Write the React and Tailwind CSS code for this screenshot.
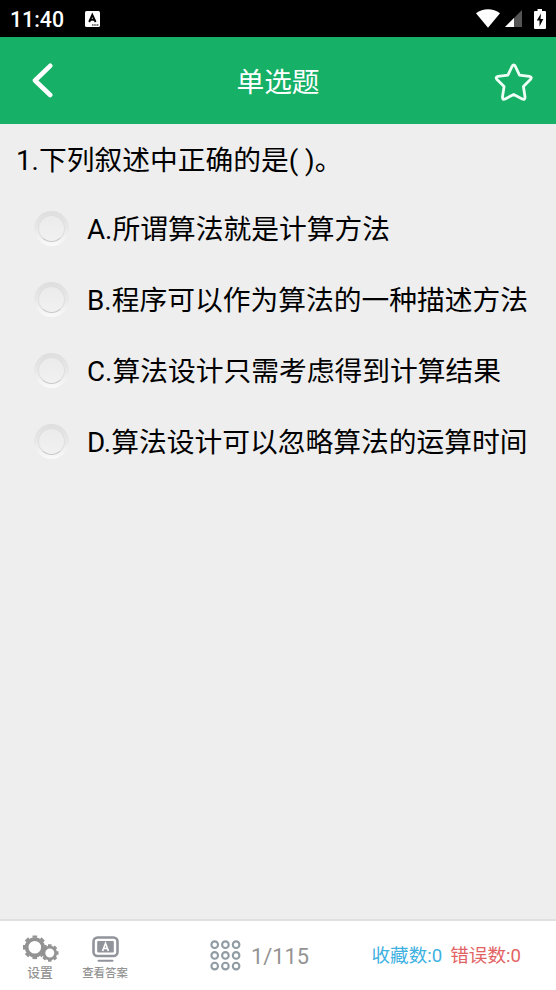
import React from 'react';

const options = [
  { key: 'A', text: '所谓算法就是计算方法' },
  { key: 'B', text: '程序可以作为算法的一种描述方法' },
  { key: 'C', text: '算法设计只需考虑得到计算结果' },
  { key: 'D', text: '算法设计可以忽略算法的运算时间' },
];

function StatusBar() {
  return (
    <div className="flex h-[37px] shrink-0 items-center bg-black pl-[10px] pr-[10px] text-white">
      <span className="mt-[2px] w-[75px] text-[21.3px] leading-none font-medium">11:40</span>
      <svg className="mt-px h-4 w-[15px]" viewBox="0 0 15 16">
        <rect width="15" height="16" rx="1.5" fill="#fff" />
        <path d="M4.2 11 7.3 3.8 10.6 11M5.3 8.8h4" fill="none" stroke="#000" strokeWidth="1.9" />
        <path d="M7 14h7" stroke="#000" strokeWidth="1.2" strokeDasharray="1.6 .6" />
      </svg>
      <svg className="ml-auto h-[19px] w-6" viewBox="0 0 24 19">
        <path d="M0 4.2C7-1.2 17-1.2 24 4.2L12 18.7Z" fill="#fff" />
      </svg>
      <svg className="ml-[5px] h-[17px] w-[17px]" viewBox="0 0 17 17">
        <path d="M17 0v17H0Z" fill="#555" />
        <path d="M9 8v9H0Z" fill="#fff" />
      </svg>
      <svg className="ml-[12px] h-5 w-[12px]" viewBox="0 0 12 20">
        <path d="M3.5 0h4.5v2H11q1 0 1 1v16q0 1-1 1H1q-1 0-1-1V3q0-1 1-1h2.5Z" fill="#fff" />
        <path d="M7 4.5 2.8 11.5H5.5V17.5L9.3 10H6.5Z" fill="#000" />
      </svg>
    </div>
  );
}

function Header() {
  return (
    <header className="flex h-[87px] shrink-0 items-center justify-between bg-[#16b067] pr-[22px] pl-[31px] text-white">
      <button className="w-[31px]" aria-label="返回">
        <svg className="h-9 w-[22px]" viewBox="0 0 22 36">
          <path d="M19.2 2.8 4 17.5 19.2 32" fill="none" stroke="#fff" strokeWidth="4.6" strokeLinecap="round" strokeLinejoin="round" />
        </svg>
      </button>
      <h1 className="mt-[4px] text-[27.7px] leading-none">单选题</h1>
      <button aria-label="收藏">
        <svg className="mt-[3px] h-10 w-10" viewBox="0 0 40 40">
          <path
            d="M18 4.5Q19.7 1.1 21.4 4.5L25.5 13.2 35.3 14.4Q38.6 15 36.4 17.5L29.4 24.5 31 34.8Q31.2 38.2 28.2 36.9L19.7 32.5 11.2 36.9Q8.2 38.2 8.5 34.8L10.1 24.5 3 17.5Q.9 15 4.1 14.4L13.9 13.2Z"
            fill="none"
            stroke="#effff6"
            strokeWidth="2.8"
            strokeLinejoin="round"
          />
        </svg>
      </button>
    </header>
  );
}

function Radio() {
  return (
    <span className="mb-px flex h-[35px] w-[35px] shrink-0 items-center justify-center rounded-full bg-linear-to-b from-[#dedede] via-[#e8e8e8] to-[#fafafa]">
      <span className="h-[27px] w-[27px] rounded-full border border-[#dedede] border-b-[#c9c9c9] bg-linear-to-b from-[#ebebeb] to-[#f1f1f1]" />
    </span>
  );
}

// Ring with eight square teeth
function Gear({ cx, cy, r, rim, tooth, width }) {
  const outer = r + rim / 2;
  return (
    <g transform={`translate(${cx} ${cy})`} stroke="#939393" fill="none">
      <circle r={r} strokeWidth={rim} />
      {[0, 45, 90, 135, 180, 225, 270, 315].map((angle) => (
        <path key={angle} d={`M0 ${-outer + 0.5}V${-outer - tooth}`} strokeWidth={width} transform={`rotate(${angle})`} />
      ))}
    </g>
  );
}

function Footer() {
  return (
    <footer className="flex h-[71px] shrink-0 border-t-2 border-[#e0e0e0] bg-white text-[#939393]">
      <button className="ml-[20px] flex w-[40px] flex-col items-center pt-[12px]">
        <svg className="h-[30px] w-[37px] shrink-0" viewBox="0 0 37 30">
          <Gear cx={12.8} cy={14.3} r={8.2} rim={3.8} tooth={1.7} width={4.6} />
          <Gear cx={27.8} cy={20} r={5.9} rim={2.8} tooth={1.4} width={3.6} />
        </svg>
        <span className="mt-[3px] text-[12.8px] leading-[14px] font-medium">设置</span>
      </button>
      <button className="ml-[15px] flex w-[60px] flex-col items-center pt-[14px]">
        <svg className="h-[28px] w-[27px] shrink-0" viewBox="0 0 27 28">
          <rect x="1.5" y="2.5" width="24" height="18.5" rx="4" fill="none" stroke="#92949c" strokeWidth="2.6" />
          <rect x="5.2" y="6" width="16.6" height="11.6" rx="1" fill="#92949c" />
          <path d="M6.5 25.7h14" stroke="#92949c" strokeWidth="2" strokeLinecap="round" />
          <path d="M10.6 16 13.5 8.3 16.4 16M11.8 13.5h3.6" fill="none" stroke="#fff" strokeWidth="1.7" />
        </svg>
        <span className="mt-[3px] text-[11.4px] leading-[14px] font-medium whitespace-nowrap">查看答案</span>
      </button>
      <div className="ml-[75px] flex items-center">
        <svg className="h-[31px] w-[31px]" viewBox="0 0 31 31" fill="none" stroke="#8f9ca3" strokeWidth="2.1">
          {[4.7, 15.4, 26.1].map((y) =>
            [4.7, 15.4, 26.1].map((x) => <circle key={`${x}-${y}`} cx={x} cy={y} r="3.3" />)
          )}
        </svg>
        <span className="mt-[2px] ml-[10px] w-[60px] text-[21.8px] leading-none">1/115</span>
      </div>
      <div className="mt-[2px] mr-[35px] ml-auto flex items-center gap-[8px] text-[18.6px] leading-none whitespace-nowrap">
        <span className="text-[#40b1e1]">收藏数:0</span>
        <span className="text-[#e26364]">错误数:0</span>
      </div>
    </footer>
  );
}

export default function App() {
  return (
    <div className="flex h-[990px] w-full flex-col overflow-hidden bg-[#eeeeee] font-[Roboto,'Noto_Sans_CJK_SC',sans-serif] text-black">
      <StatusBar />
      <Header />
      <main className="flex-1">
        <p className="pt-[16px] pl-[16px] text-[27.75px] leading-[42px] whitespace-nowrap">1.下列叙述中正确的是( )。</p>
        <ul className="mt-[11px]">
          {options.map((option) => (
            <li key={option.key} className="flex h-[71px] items-center pl-[34px]">
              <Radio />
              <span className="mt-[2px] ml-[18px] text-[27.75px] leading-none whitespace-nowrap">
                {option.key}.{option.text}
              </span>
            </li>
          ))}
        </ul>
      </main>
      <Footer />
    </div>
  );
}
